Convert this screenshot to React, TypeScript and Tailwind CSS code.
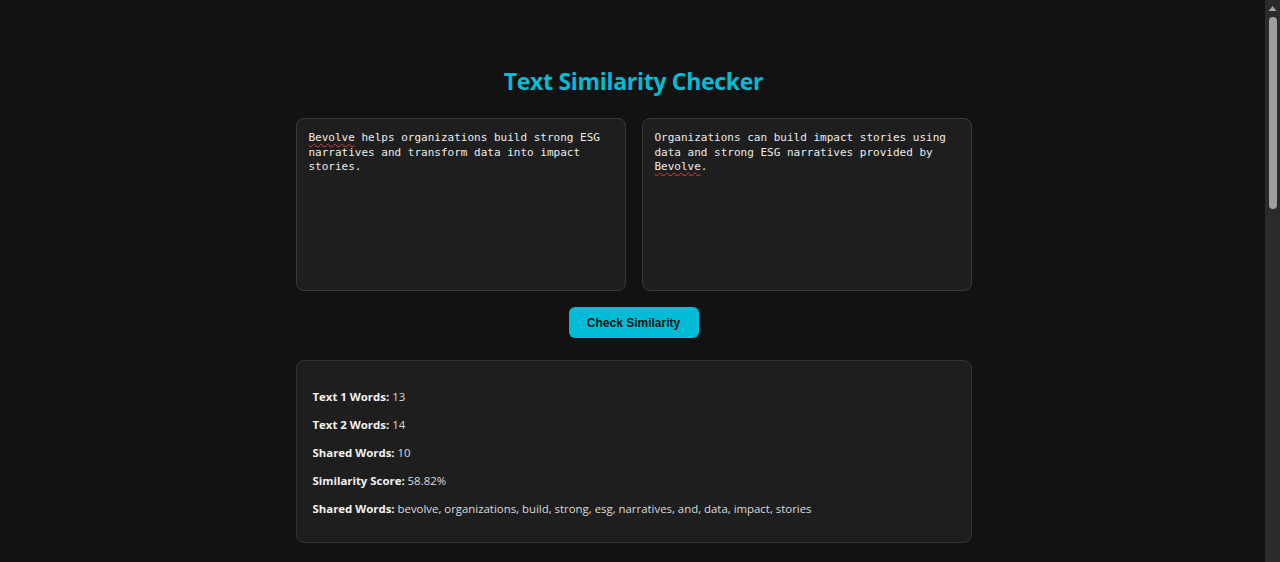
const results = [
  { label: 'Text 1 Words:', value: '13' },
  { label: 'Text 2 Words:', value: '14' },
  { label: 'Shared Words:', value: '10' },
  { label: 'Similarity Score:', value: '58.82%' },
  {
    label: 'Shared Words:',
    value: 'bevolve, organizations, build, strong, esg, narratives, and, data, impact, stories',
  },
];

const Misspelled = ({ children }: { children: string }) => (
  <span className="underline decoration-wavy decoration-[#e03c3c] decoration-1 underline-offset-2">
    {children}
  </span>
);

const TextBox = ({ children }: { children: React.ReactNode }) => (
  <div
    role="textbox"
    className="h-[173px] rounded-lg border border-[#3a3a3a] bg-[#1e1e1e] px-3 pt-[12px] text-[11px] leading-[14.5px] text-[#ececec] whitespace-pre-wrap"
    style={{ fontFamily: '"DejaVu Sans Mono", "Liberation Mono", monospace' }}
  >
    {children}
  </div>
);

// window scrollbar as seen in the screenshot
const ScrollBar = () => (
  <div className="flex w-[15px] shrink-0 flex-col items-center bg-[#2b2b2b]">
    <svg width="9" height="15" viewBox="0 0 9 15" className="shrink-0">
      <path d="M0.5 11 L4.5 6 L8.5 11 Z" fill="#a3a3a3" />
    </svg>
    <div className="mt-[2px] h-[192px] w-[8px] rounded-full bg-[#9f9f9f]" />
  </div>
);

export default function App() {
  return (
    <div
      className="flex h-[562px] overflow-hidden bg-[#121212] text-[#e6e6e6]"
      style={{ fontFamily: '"Open Sans", "Noto Sans", sans-serif' }}
    >
      <main className="flex-1 pl-[2px]">
        <div className="mx-auto w-[676px] pt-[64px]">
          <h1 className="text-center text-[23px] font-bold leading-[34px] tracking-[-0.3px] text-[#00bcd4]">
            Text Similarity Checker
          </h1>

          <div className="mt-[20px] grid grid-cols-2 gap-4">
            <TextBox>
              <Misspelled>Bevolve</Misspelled> helps organizations build strong ESG narratives and transform data into impact stories.
            </TextBox>
            <TextBox>
              Organizations can build impact stories using data and strong ESG narratives provided by <Misspelled>Bevolve</Misspelled>.
            </TextBox>
          </div>

          <div className="mt-4 flex justify-center">
            <button
              className="h-[31px] w-[130px] rounded-md bg-[#00bcd4] text-[12px] font-bold text-[#111]"
              style={{ fontFamily: '"Liberation Sans", Arial, sans-serif' }}
            >
              Check Similarity
            </button>
          </div>

          <div className="mt-[22px] flex flex-col gap-2 rounded-lg border border-[#333] bg-[#1e1e1e] px-4 pt-[26px] pb-[23px] text-[11.4px]">
            {results.map((r, i) => (
              <p key={i} className="leading-[20px] text-[#dcdcdc]">
                <strong className="font-bold text-[#f2f2f2]">{r.label}</strong> {r.value}
              </p>
            ))}
          </div>
        </div>
      </main>
      <ScrollBar />
    </div>
  );
}
